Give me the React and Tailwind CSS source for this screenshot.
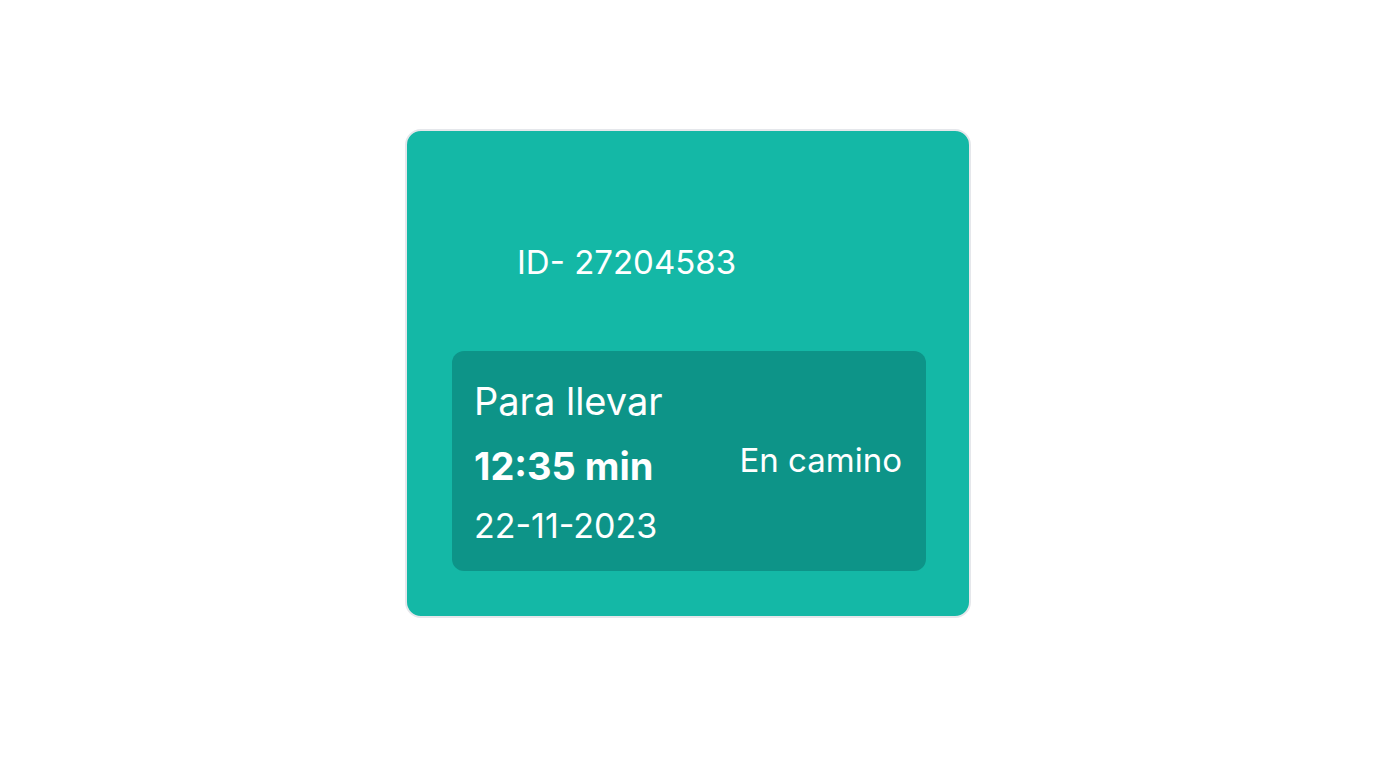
import React from "react";

const order = {
  id: "27204583",
  type: "Para llevar",
  time: "12:35 min",
  status: "En camino",
  date: "22-11-2023",
};

const OrderCard = ({ data }) => {
  return (
    <div className="w-[566px] h-[489px] rounded-[16px] border-2 border-[#e5e7eb] bg-[#14b8a6] pl-[45px] pr-[43px] pb-[45px] flex flex-col text-white">
      <div className="flex-1 flex items-center pl-[65px] pt-[42px]">
        <p className="text-[33px] leading-none">ID- {data.id}</p>
      </div>
      <div className="h-[220px] rounded-[12px] bg-[#0d9488] pl-[22px] pr-[24px] flex items-start justify-between">
        <div className="flex flex-col pt-[28px]">
          <p className="text-[38px] leading-[44px]">{data.type}</p>
          <p className="text-[38px] leading-[44px] font-bold mt-[21px]">{data.time}</p>
          <p className="text-[34px] leading-[40px] mt-[18px]">{data.date}</p>
        </div>
        <p className="text-[33px] leading-none self-center mb-[2px]">{data.status}</p>
      </div>
    </div>
  );
};

export default function App() {
  return (
    <div
      className="min-h-screen bg-white flex justify-center pt-[129px]"
      style={{ fontFamily: "Inter, 'Noto Sans', sans-serif" }}
    >
      <OrderCard data={order} />
    </div>
  );
}
